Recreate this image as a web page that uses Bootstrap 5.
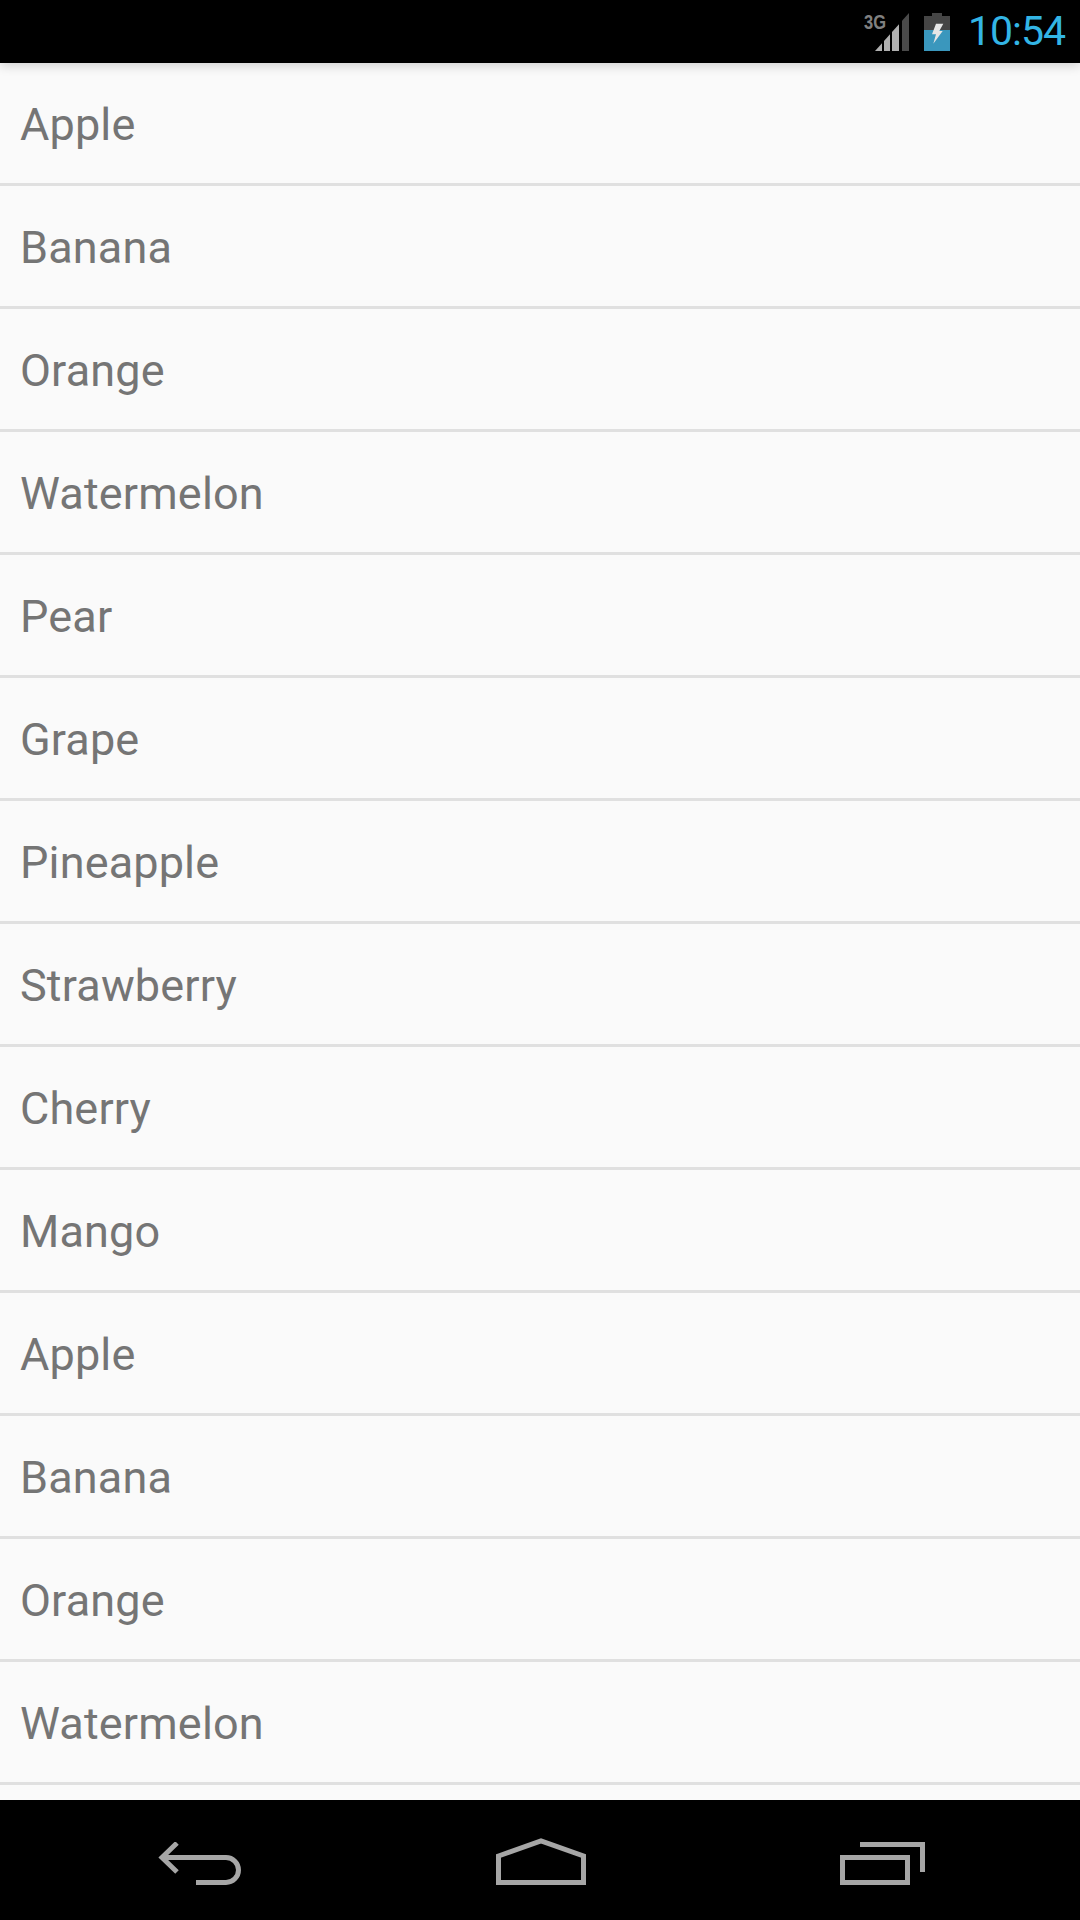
<!DOCTYPE html>
<html lang="en">
<head>
<meta charset="utf-8">
<title>Fruit list</title>
<link rel="stylesheet" href="https://cdn.jsdelivr.net/npm/bootstrap@5.3.0/dist/css/bootstrap.min.css">
<style>
html, body { height: 100%; }
body { background: #fafafa; font-family: Roboto, "Liberation Sans", sans-serif; overflow: hidden; }
.app-shell { height: 1920px; }
.status-strip { height: 63px; background: #000; box-shadow: 0 3px 10px rgba(0,0,0,.16); z-index: 2; padding-right: 15px; }
.clock-text { color: #33b5e5; font-size: 41px; letter-spacing: -1px; line-height: 1; margin-left: 18px; }
.net-text { font-family: "Liberation Sans", sans-serif; font-weight: 700; font-size: 21px; fill: #808080; }
.battery-glyph { margin-left: 14px; }
.fruit-list { background: #fafafa; overflow: hidden; min-height: 0; }
.fruit-list .list-group-item, .fruit-list .list-group-item:last-child { height: 123px; background: transparent; color: #757575; font-size: 45px; letter-spacing: .15px; line-height: 1; padding: 2px 0 0 20px; border: 0; border-bottom: 3px solid #e0e0e0; border-radius: 0; flex: none; }
.nav-strip { height: 120px; background: #000; padding: 0 155px 35px 158px; }
.nav-strip svg { display: block; }
.stroke-icon { fill: none; stroke: #a6a6a6; stroke-width: 5; }
</style>
</head>
<body>
<div class="app-shell d-flex flex-column">
  <header class="status-strip position-relative d-flex align-items-center justify-content-end flex-shrink-0">
    <svg width="46" height="50" viewBox="0 -6 46 50" aria-hidden="true">
      <text x="0" y="16" class="net-text" textLength="22" lengthAdjust="spacingAndGlyphs">3G</text>
      <path d="M11 38 L18 30.200 V38 Z" fill="#b0b0b0"/>
      <path d="M20 28 L26 21.200 V38 H20 Z" fill="#b0b0b0"/>
      <path d="M28 19 L35 11.200 V38 H28 Z" fill="#b0b0b0"/>
      <path d="M38 7.800 L45 0 V38 H38 Z" fill="#4a4a4a"/>
    </svg>
    <svg class="battery-glyph" width="26" height="38" viewBox="0 0 26 38" aria-hidden="true">
      <path d="M8 0 H18 V3 H26 V38 H0 V3 H8 Z" fill="#454545"/>
      <rect x="0" y="17" width="26" height="21" fill="#3a97bd"/>
      <path d="M12 10.700 H19.300 L15.300 18 H18.700 L9.300 30.700 L12 21.300 H8 Z" fill="#e6e6e6"/>
    </svg>
    <span class="clock-text">10:54</span>
  </header>
  <ul class="fruit-list list-group list-group-flush flex-grow-1">
    <li class="list-group-item d-flex align-items-center">Apple</li>
    <li class="list-group-item d-flex align-items-center">Banana</li>
    <li class="list-group-item d-flex align-items-center">Orange</li>
    <li class="list-group-item d-flex align-items-center">Watermelon</li>
    <li class="list-group-item d-flex align-items-center">Pear</li>
    <li class="list-group-item d-flex align-items-center">Grape</li>
    <li class="list-group-item d-flex align-items-center">Pineapple</li>
    <li class="list-group-item d-flex align-items-center">Strawberry</li>
    <li class="list-group-item d-flex align-items-center">Cherry</li>
    <li class="list-group-item d-flex align-items-center">Mango</li>
    <li class="list-group-item d-flex align-items-center">Apple</li>
    <li class="list-group-item d-flex align-items-center">Banana</li>
    <li class="list-group-item d-flex align-items-center">Orange</li>
    <li class="list-group-item d-flex align-items-center">Watermelon</li>
  </ul>
  <nav class="nav-strip d-flex flex-shrink-0 align-items-end justify-content-between">
    <svg width="83" height="43" viewBox="0 0 83 43" class="stroke-icon" aria-hidden="true">
      <path d="M19 1 L4 15.500 L19 30"/>
      <path d="M4 15.500 H68 A12.500 12.500 0 0 1 68 40.500 H38"/>
    </svg>
    <svg width="90" height="47" viewBox="0 0 90 47" class="stroke-icon" aria-hidden="true">
      <path d="M2.500 18 L45 3 L87.500 18 V44.500 H2.500 Z"/>
    </svg>
    <svg width="85" height="43" viewBox="0 0 85 43" class="stroke-icon" aria-hidden="true">
      <rect x="2.500" y="15.500" width="65" height="25"/>
      <path d="M20 2.500 H82.500 V30"/>
    </svg>
  </nav>
</div>
<script src="https://cdn.jsdelivr.net/npm/bootstrap@5.3.0/dist/js/bootstrap.bundle.min.js"></script>
</body>
</html>
